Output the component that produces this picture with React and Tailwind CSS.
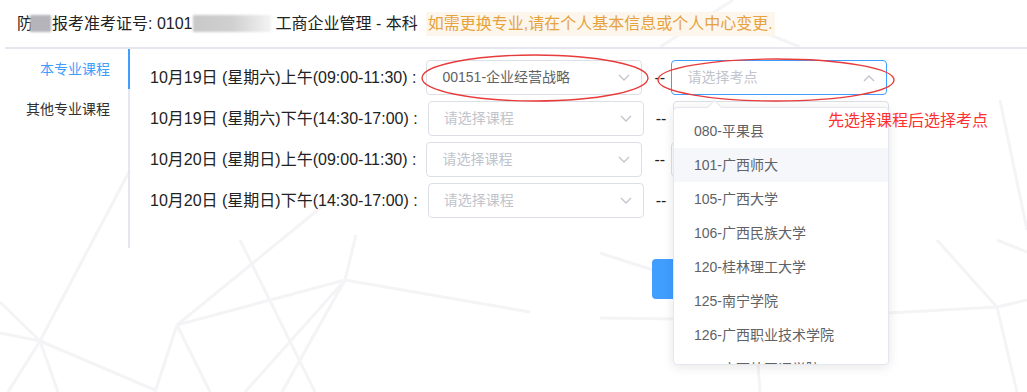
import React from 'react';

const rows = [
  { label: '10月19日 (星期六)上午(09:00-11:30) :', course: '00151-企业经营战略', open: true },
  { label: '10月19日 (星期六)下午(14:30-17:00) :', course: null },
  { label: '10月20日 (星期日)上午(09:00-11:30) :', course: null },
  { label: '10月20日 (星期日)下午(14:30-17:00) :', course: null },
];

const sites = [
  '080-平果县',
  '101-广西师大',
  '105-广西大学',
  '106-广西民族大学',
  '120-桂林理工大学',
  '125-南宁学院',
  '126-广西职业技术学院',
  '128-广西外国语学院',
];

const Arrow = ({ up }) => (
  <svg width="12" height="8" viewBox="0 0 12 8" className="shrink-0">
    <polyline
      points={up ? '1,7 6,2 11,7' : '1,1 6,6 11,1'}
      fill="none"
      stroke="#c0c4cc"
      strokeWidth="1.3"
    />
  </svg>
);

const Select = ({ value, placeholder, focused, up }) => (
  <div
    className={`w-[216px] h-[35px] rounded-[4px] border bg-white flex items-center justify-between pl-[15px] pr-[11px] text-[14px] ${
      focused ? 'border-[#409eff]' : 'border-[#dcdfe6]'
    }`}
  >
    <span className={value ? 'text-[#606266]' : 'text-[#c0c4cc]'}>{value || placeholder}</span>
    <Arrow up={up} />
  </div>
);

// faint polygon lines of the page background
const Backdrop = () => (
  <svg className="absolute inset-0 pointer-events-none" width="1027" height="392">
    <g stroke="#f4f4f6" strokeWidth="3" fill="none">
      <line x1="0" y1="302" x2="40" y2="341" />
      <line x1="0" y1="333" x2="40" y2="341" />
      <line x1="40" y1="341" x2="130" y2="170" />
      <line x1="40" y1="341" x2="8" y2="392" />
      <line x1="40" y1="341" x2="58" y2="392" />
      <line x1="40" y1="341" x2="155" y2="390" />
      <line x1="177" y1="325" x2="155" y2="392" />
      <line x1="177" y1="325" x2="210" y2="392" />
      <line x1="177" y1="325" x2="330" y2="200" />
      <line x1="177" y1="325" x2="345" y2="280" />
      <line x1="345" y1="280" x2="356" y2="235" />
      <line x1="345" y1="280" x2="530" y2="312" />
      <line x1="345" y1="280" x2="245" y2="392" />
      <line x1="345" y1="280" x2="282" y2="392" />
      <line x1="240" y1="240" x2="315" y2="392" />
      <line x1="600" y1="253" x2="653" y2="270" />
      <line x1="600" y1="318" x2="760" y2="320" />
      <line x1="760" y1="320" x2="997" y2="307" />
      <line x1="755" y1="320" x2="760" y2="392" />
      <line x1="997" y1="307" x2="1027" y2="300" />
      <line x1="997" y1="307" x2="937" y2="240" />
      <line x1="997" y1="307" x2="1017" y2="392" />
      <line x1="997" y1="240" x2="1027" y2="252" />
      <line x1="660" y1="47" x2="733" y2="0" />
      <line x1="733" y1="20" x2="800" y2="47" />
      <line x1="1000" y1="100" x2="1027" y2="230" />
    </g>
  </svg>
);

export default function App() {
  return (
    <div
      className="relative w-[1027px] h-[392px] overflow-hidden bg-white text-[#303133]"
      style={{ fontFamily: '"Liberation Sans", "Noto Sans CJK SC", sans-serif' }}
    >
      <Backdrop />

      <div className="relative">
        {/* Header */}
        <div className="h-[47px] flex items-center pl-[17px] text-[16px] text-[#222] whitespace-pre">
          <span>防</span>
          <span className="w-[21px] h-[17px] -ml-[3px] mr-[1px] bg-[#b4b4ba] blur-[1px]" />
          <span>报考准考证号: 0101</span>
          <span className="w-[78px] h-[17px] bg-gradient-to-r from-[#c8c8c8] via-[#d0d0d0] to-[#f4f4f6] blur-[1px]" />
          <span className="ml-[5px]">工商企业管理 - 本科</span>
          <span className="ml-[8px] bg-[#fdf6ec] text-[#e6a23c] px-[2px]">如需更换专业,请在个人基本信息或个人中心变更.</span>
        </div>
        <div className="ml-[5px] h-[2px] bg-[#e4e7ed]" />

        {/* Tabs + rows */}
        <div className="flex">
          <div className="w-[130px] h-[199px] border-r-2 border-[#e4e7ed] relative text-[14px]">
            <div className="absolute right-[-2px] top-0 w-[2px] h-[40px] bg-[#409eff]" />
            <div className="h-[40px] flex items-center justify-end pr-[18px] text-[#409eff]">本专业课程</div>
            <div className="h-[40px] flex items-center justify-end pr-[18px] text-[#303133]">其他专业课程</div>
          </div>
          <div className="pl-[20px] pt-[11px] flex flex-col gap-[6px]">
            {rows.map((r) => (
              <div key={r.label} className="flex items-center h-[35px]">
                <span className="text-[16px] text-[#222] whitespace-pre">{r.label}</span>
                <div className="ml-[10px]">
                  <Select value={r.course} placeholder="请选择课程" />
                </div>
                <span className="ml-[12px] mr-[6px] text-[16px] text-[#222] w-[11px]">--</span>
                {/* site selects under the open dropdown show no text */}
                <Select placeholder={r.open ? '请选择考点' : ''} focused={r.open} up={r.open} />
              </div>
            ))}
          </div>
        </div>

        <div className="mt-[11px] ml-[652px] w-[98px] h-[40px] rounded-[4px] bg-[#409eff]" />
      </div>

      {/* Site dropdown */}
      <div className="absolute left-[673px] top-[107px] w-[216px] h-[258px] bg-white border border-[#e4e7ed] rounded-[4px] shadow-[0_2px_12px_rgba(0,0,0,0.1)]">
        <div className="absolute left-[35px] -top-[6px] w-[11px] h-[11px] rotate-45 bg-white border-l border-t border-[#e4e7ed]" />
        <div className="h-full overflow-hidden pt-[6px] relative">
          {sites.map((s, i) => (
            <div
              key={s}
              className={`h-[34px] leading-[34px] px-[20px] text-[14px] text-[#606266] ${i === 1 ? 'bg-[#f5f7fa]' : ''}`}
            >
              {s}
            </div>
          ))}
        </div>
      </div>

      {/* Red annotations */}
      <svg className="absolute inset-0 pointer-events-none" width="1027" height="392">
        <ellipse cx="535" cy="78" rx="113" ry="23" fill="none" stroke="#e83b3b" strokeWidth="1.4" />
        <ellipse cx="776" cy="80" rx="118" ry="21" fill="none" stroke="#e83b3b" strokeWidth="1.4" />
      </svg>
      <div className="absolute left-[828px] top-[110px] text-[16px] leading-[22px] text-[#ff3030]">
        先选择课程后选择考点
      </div>
    </div>
  );
}
